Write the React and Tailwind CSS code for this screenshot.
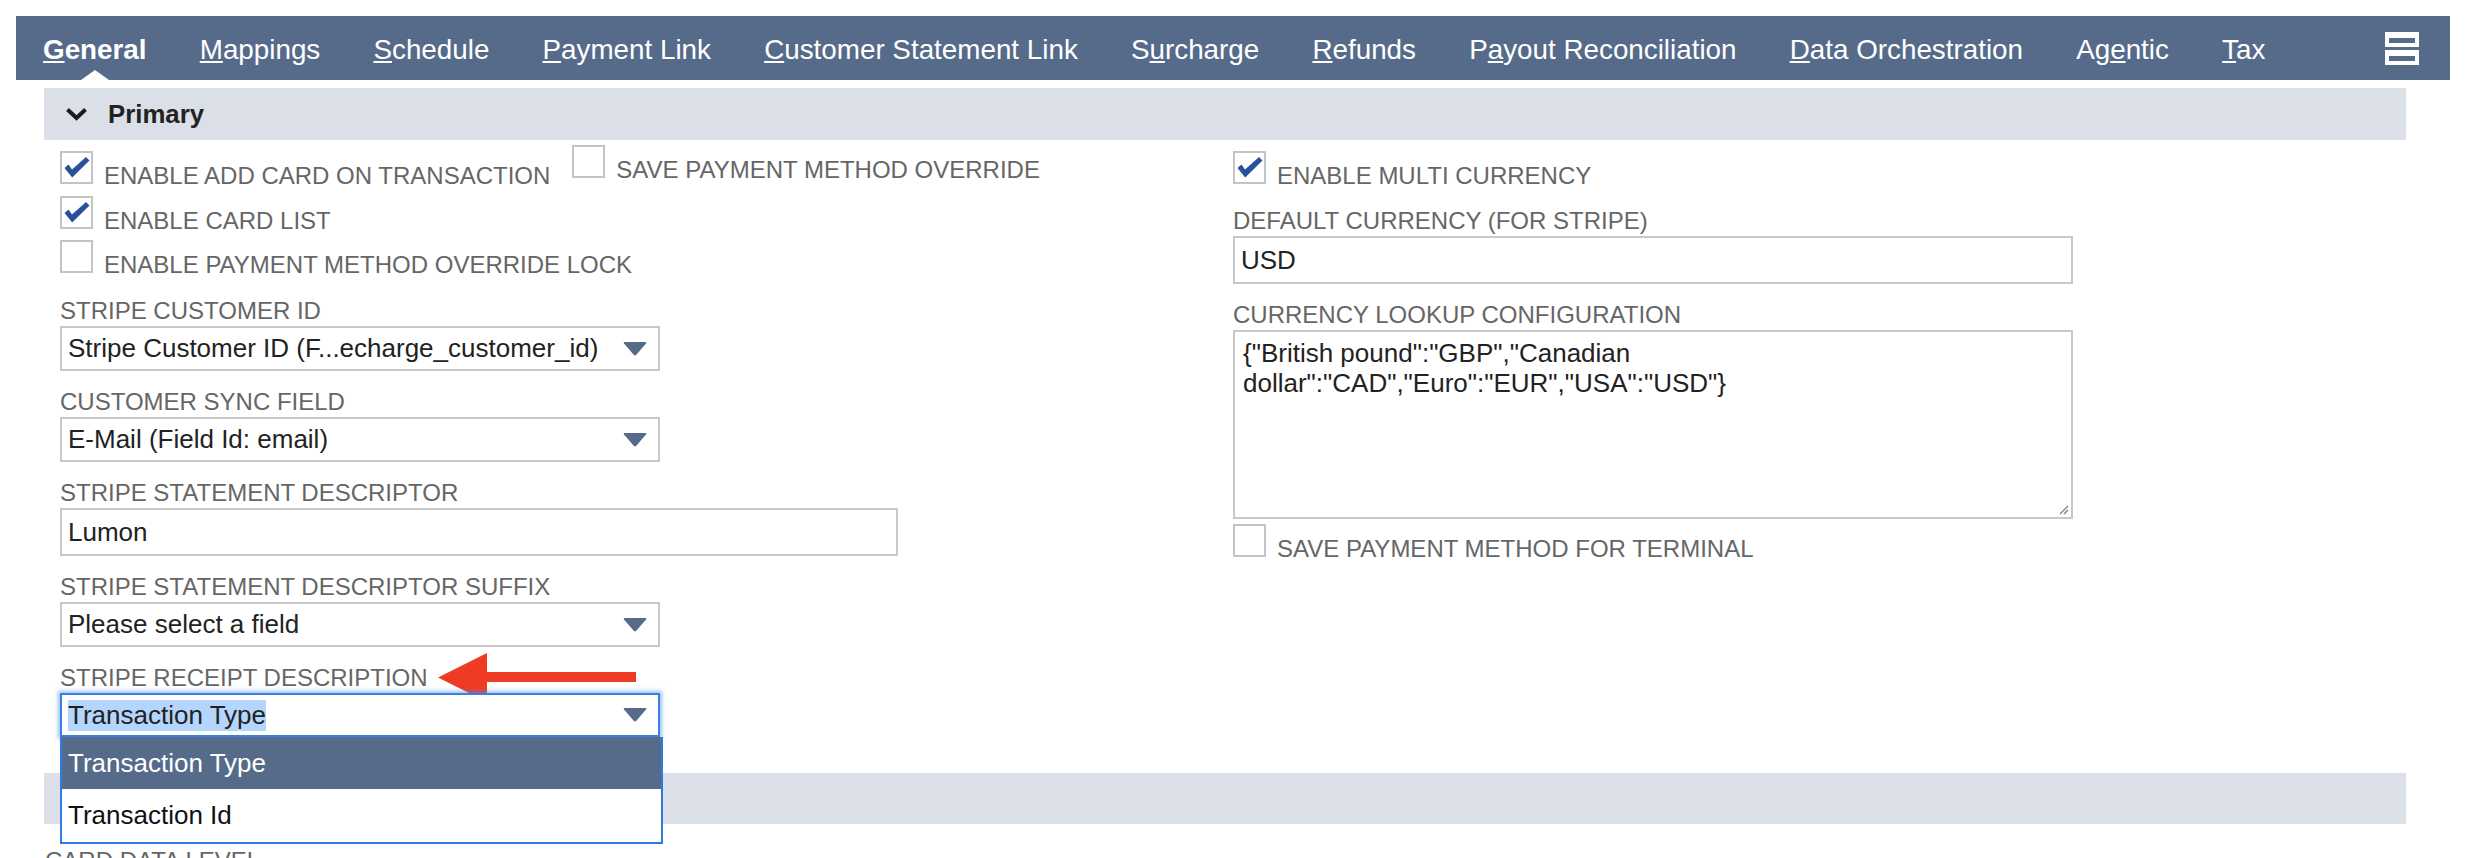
import React from "react";

const tabs = [
  { a: "", k: "G", b: "eneral", active: true },
  { a: "", k: "M", b: "appings" },
  { a: "", k: "S", b: "chedule" },
  { a: "", k: "P", b: "ayment Link" },
  { a: "", k: "C", b: "ustomer Statement Link" },
  { a: "S", k: "u", b: "rcharge" },
  { a: "", k: "R", b: "efunds" },
  { a: "P", k: "a", b: "yout Reconciliation" },
  { a: "", k: "D", b: "ata Orchestration" },
  { a: "Ag", k: "e", b: "ntic" },
  { a: "", k: "T", b: "ax" },
];

function Tab({ a, k, b, active }) {
  return (
    <div
      className={`relative flex h-full items-center whitespace-nowrap pt-[3px] text-[27.8px] leading-[32px] text-white ${
        active ? "font-bold" : "font-normal"
      }`}
    >
      <span>
        {a}
        <span className="underline decoration-2 underline-offset-[2px]">{k}</span>
        {b}
      </span>
      {active && (
        <span className="absolute bottom-0 left-1/2 h-0 w-0 -translate-x-1/2 border-x-[14px] border-b-[10px] border-x-transparent border-b-white" />
      )}
    </div>
  );
}

function Box({ checked }) {
  return (
    <span className="relative block h-[33px] w-[33px] shrink-0 border-2 border-[#c4c4c4] bg-white">
      {checked && (
        <svg
          className="absolute -left-[2px] -top-[2px]"
          width="33"
          height="33"
          viewBox="0 0 33 33"
        >
          <path d="M4.5 17 L8.5 13.5 L12 18.5 L26 6 L29.5 9.5 L12.2 26.5 Z" fill="#27529a" />
        </svg>
      )}
    </span>
  );
}

function CheckRow({ checked, label, className = "" }) {
  return (
    <div className={`flex items-end gap-[11px] ${className}`}>
      <Box checked={checked} />
      <span className="whitespace-nowrap text-[24px] leading-[16px] text-[#666666]">{label}</span>
    </div>
  );
}

function Label({ children }) {
  return (
    <div className="whitespace-nowrap text-[24px] leading-[30px] text-[#666666]">{children}</div>
  );
}

function Caret() {
  return (
    <svg width="24" height="14" viewBox="0 0 24 14" className="shrink-0">
      <path
        d="M1.6 0 H22.4 Q24 0 23 1.4 L13.3 12.7 Q12 14 10.7 12.7 L1 1.4 Q0 0 1.6 0 Z"
        fill="#566b8a"
      />
    </svg>
  );
}

function Select({ value }) {
  return (
    <div className="flex h-[45px] w-[600px] items-center justify-between border-2 border-[#c8c8c8] bg-white pl-[6px] pr-[11px] text-[26px] text-[#222222]">
      <span className="whitespace-nowrap">{value}</span>
      <Caret />
    </div>
  );
}

function TextInput({ value, width }) {
  return (
    <div
      className={`flex h-[48px] items-center border-2 border-[#c8c8c8] bg-white pl-[6px] text-[26px] text-[#222222] ${width}`}
    >
      {value}
    </div>
  );
}

export default function App() {
  return (
    <div className="h-[858px] w-full overflow-hidden bg-white px-[16px] pt-[16px] font-['Liberation_Sans',Arial,Helvetica,sans-serif]">
      {/* top tab bar */}
      <nav className="flex h-[64px] items-stretch bg-[#566b8a] pl-[27px] pr-[31px]">
        <div className="flex gap-[53.2px]">
          {tabs.map((t) => (
            <Tab key={t.a + t.k + t.b} {...t} />
          ))}
        </div>
        <div className="ml-auto flex items-center">
          <svg width="34" height="33" viewBox="0 0 34 33">
            <rect x="0" y="0" width="34" height="15" fill="#ffffff" />
            <rect x="4" y="6" width="26" height="5" fill="#566b8a" />
            <rect x="0" y="18" width="34" height="15" fill="#ffffff" />
            <rect x="4" y="24" width="26" height="5" fill="#566b8a" />
          </svg>
        </div>
      </nav>

      <div className="ml-[28px] mr-[44px] mt-[8px]">
        {/* section header */}
        <div className="flex h-[52px] items-center bg-[#dbdfe7] pl-[21px]">
          <svg width="23" height="14" viewBox="0 0 23 14">
            <polyline
              points="2.5,2.5 11.5,11 20.5,2.5"
              fill="none"
              stroke="#1c1c1c"
              strokeWidth="4"
            />
          </svg>
          <span className="ml-[20px] text-[25.8px] font-bold text-[#222222]">Primary</span>
        </div>

        <div className="flex">
          {/* left column */}
          <div className="w-[1189px] shrink-0 pl-[16px]">
            <div className="flex items-end pt-[5px]">
              <CheckRow checked label="ENABLE ADD CARD ON TRANSACTION" />
              <CheckRow label="SAVE PAYMENT METHOD OVERRIDE" className="mb-[6px] ml-[22px]" />
            </div>
            <CheckRow checked label="ENABLE CARD LIST" className="mt-[12px]" />
            <CheckRow label="ENABLE PAYMENT METHOD OVERRIDE LOCK" className="mt-[11px]" />

            <div className="mt-[23px]">
              <Label>STRIPE CUSTOMER ID</Label>
              <Select value="Stripe Customer ID (F...echarge_customer_id)" />
            </div>
            <div className="mt-[16px]">
              <Label>CUSTOMER SYNC FIELD</Label>
              <Select value="E-Mail (Field Id: email)" />
            </div>
            <div className="mt-[16px]">
              <Label>STRIPE STATEMENT DESCRIPTOR</Label>
              <TextInput value="Lumon" width="w-[838px]" />
            </div>
            <div className="mt-[16px]">
              <Label>STRIPE STATEMENT DESCRIPTOR SUFFIX</Label>
              <Select value="Please select a field" />
            </div>
            <div className="relative mt-[16px]">
              <Label>STRIPE RECEIPT DESCRIPTION</Label>
              <svg
                className="absolute -top-[10px] left-[378px]"
                width="198"
                height="49"
                viewBox="0 0 198 49"
              >
                <path d="M0 24.5 L49 0 L49 19 L198 19 L198 29 L49 29 L49 49 Z" fill="#ee3b24" />
              </svg>
              <div className="relative z-10 w-[600px]">
                <div className="flex h-[44px] items-center justify-between border-2 border-[#3a80e4] bg-white pl-[6px] pr-[11px] text-[26px] text-[#222222] shadow-[0_0_4px_2px_rgba(80,145,230,0.55)]">
                  <span className="whitespace-nowrap bg-[#b4d5fe] leading-[31px]">Transaction Type</span>
                  <Caret />
                </div>
                <div className="absolute left-0 top-full w-[603px] border-x-2 border-b-2 border-[#2f7be3] bg-white text-[26px]">
                  <div className="flex h-[52px] items-center bg-[#566b8a] pl-[6px] text-white">
                    Transaction Type
                  </div>
                  <div className="flex h-[53px] items-center pl-[6px] text-[#111111]">
                    Transaction Id
                  </div>
                </div>
              </div>
            </div>
          </div>

          {/* right column */}
          <div className="flex-1 pt-[11px]">
            <CheckRow checked label="ENABLE MULTI CURRENCY" />
            <div className="mt-[22px]">
              <Label>DEFAULT CURRENCY (FOR STRIPE)</Label>
              <TextInput value="USD" width="w-[840px]" />
            </div>
            <div className="mt-[16px]">
              <Label>CURRENCY LOOKUP CONFIGURATION</Label>
              <div className="relative h-[189px] w-[840px] border-2 border-[#c8c8c8] bg-white pl-[8px] pt-[6px] text-[26px] leading-[30px] text-[#222222]">
                <div>{'{"British pound":"GBP","Canadian'}</div>
                <div>{'dollar":"CAD","Euro":"EUR","USA":"USD"}'}</div>
                <svg
                  className="absolute bottom-[2px] right-[2px]"
                  width="11"
                  height="11"
                  viewBox="0 0 11 11"
                >
                  <line x1="10" y1="2" x2="2" y2="10" stroke="#7a7a7a" strokeWidth="1.2" />
                  <line x1="10" y1="6" x2="6" y2="10" stroke="#7a7a7a" strokeWidth="1.2" />
                </svg>
              </div>
            </div>
            <CheckRow label="SAVE PAYMENT METHOD FOR TERMINAL" className="mt-[5px]" />
          </div>
        </div>

        {/* next section header */}
        <div className="mt-[36px] h-[51px] bg-[#dbdfe7]" />
        <div className="ml-[1px] mt-[22px] whitespace-nowrap text-[24px] leading-[30px] text-[#666666]">
          CARD DATA LEVEL
        </div>
      </div>
    </div>
  );
}
